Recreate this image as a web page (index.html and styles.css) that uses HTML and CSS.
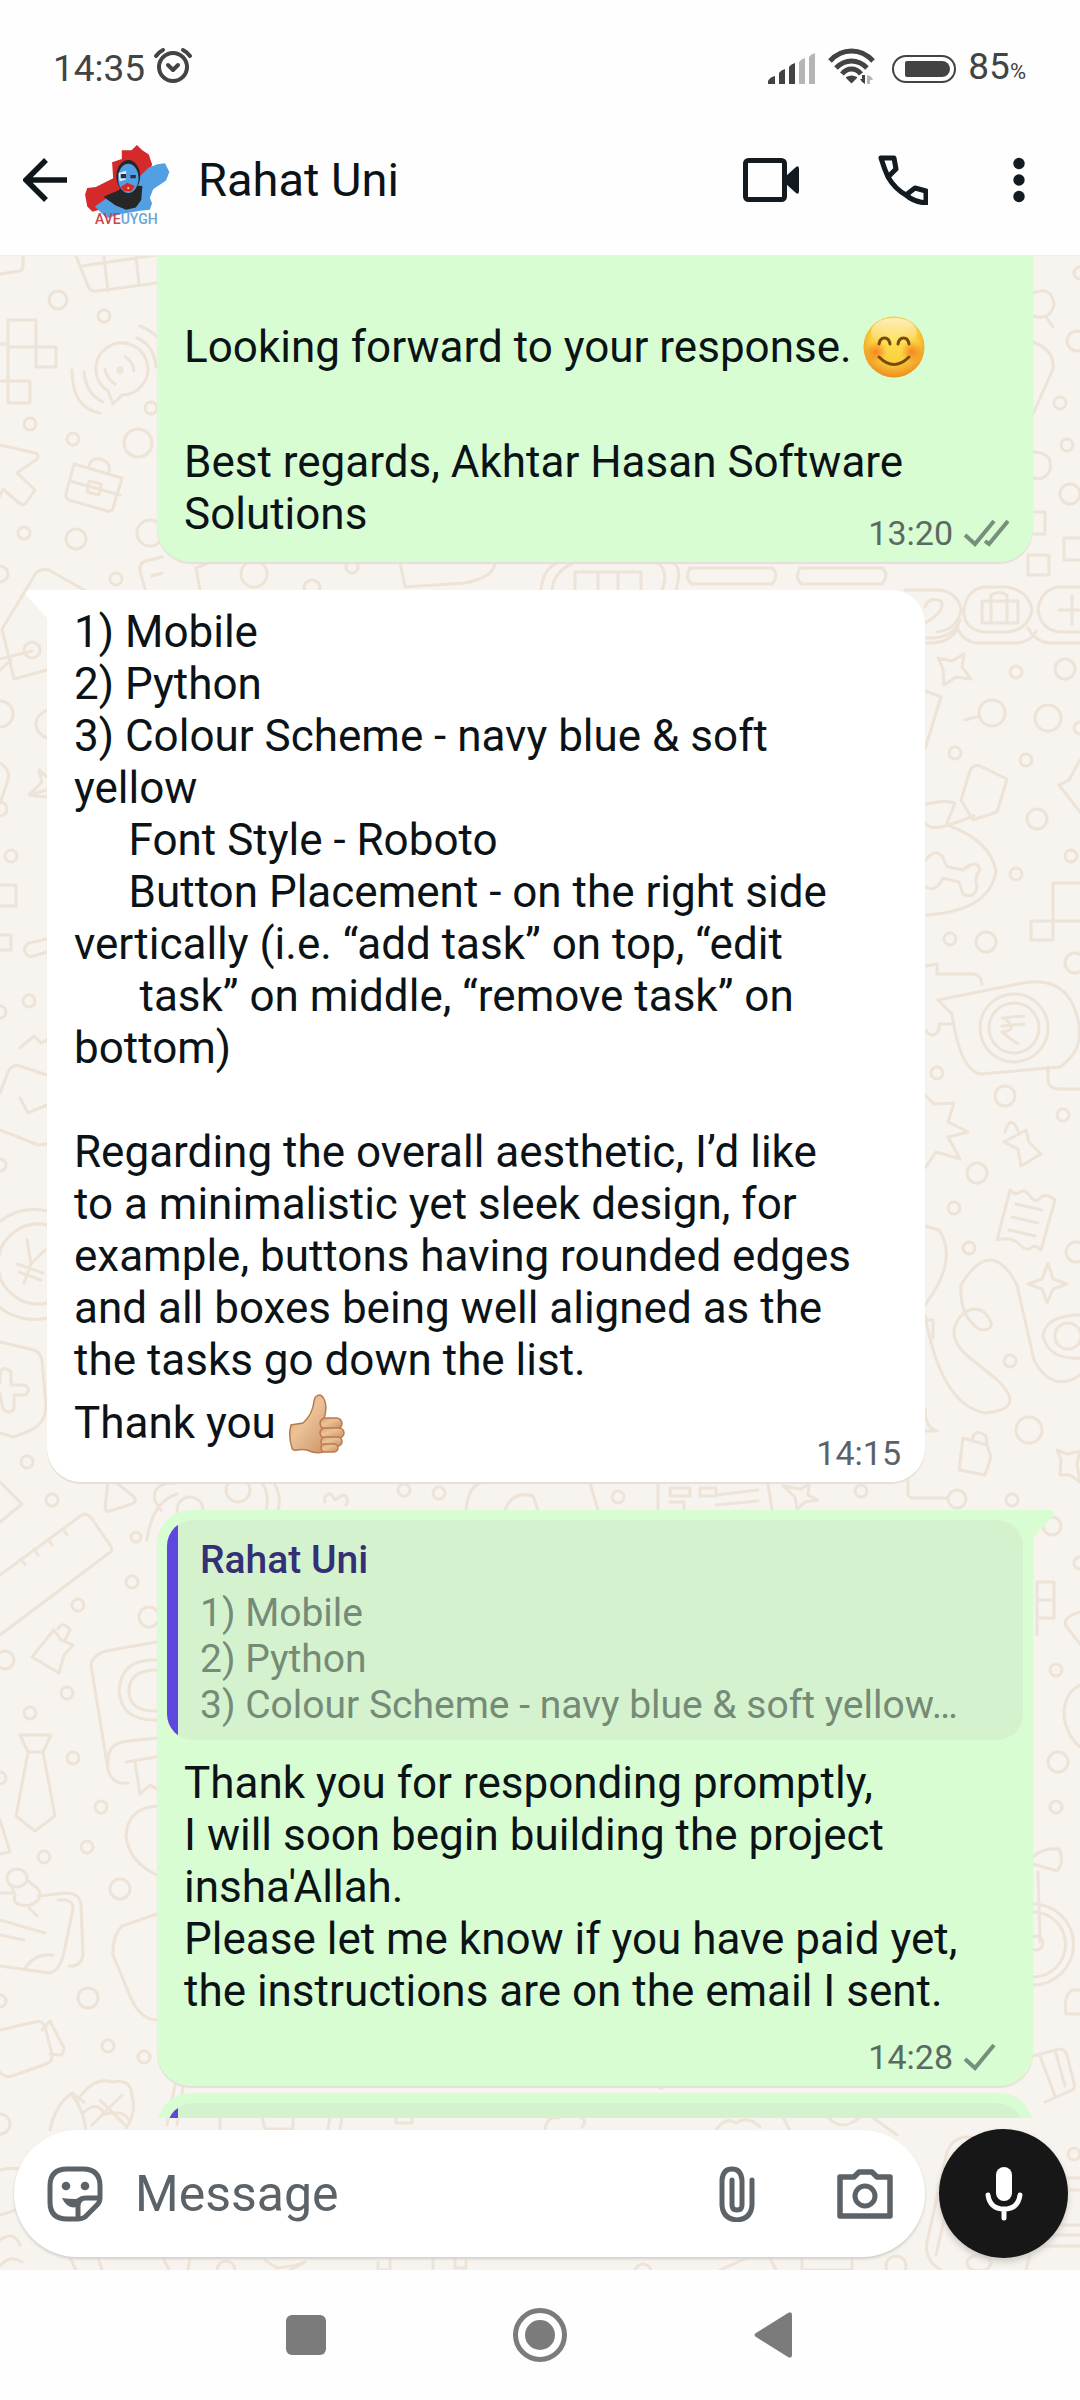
FILE: index.html
```
<!DOCTYPE html>
<html lang="en">
<head>
<meta charset="utf-8">
<meta name="viewport" content="width=device-width, initial-scale=1">
<title>Rahat Uni</title>
<link rel="stylesheet" href="styles.css">
</head>
<body>
<div class="status-bar">
  <div class="status-group">
    <time class="clock">14:35</time>
    <svg class="alarm" viewBox="0 0 40 40" width="40" height="40" aria-hidden="true"><g fill="none" stroke="#434343" stroke-width="4" stroke-linecap="round" stroke-linejoin="round"><circle cx="20" cy="21" r="14"/><path d="M15 19l5 5 5-5M3 10q3-4 7-6M37 10q-3-4-7-6"/></g></svg>
  </div>
  <div class="status-group status-right">
    <svg viewBox="0 0 48 32" width="48" height="32" aria-hidden="true"><path fill="#434343" d="M0 31v-3q2-4 7-5v8zM11 31V20q2-3 6-4v15zM21 31V14q2-3 6-4v21z"/><path fill="#b5b5b5" d="M31 31V9q2-3 6-4v26zM41 31V4q2-3 6-4v31z"/></svg>
    <svg class="wifi" viewBox="0 0 48 36" width="48" height="36" aria-hidden="true"><g fill="none" stroke="#434343" stroke-width="5"><path d="M2 13q9-10 21.500-10T45 13M8 20q7-7 15.500-7T39 20M14 26q4-5 9.500-5t9.500 5"/></g><path fill="#434343" d="M18 29q5.500-3 11 0v1l-5.500 5.500L18 30zM37 27v9q-3-1-5-5h2v-4z"/><path fill="#b5b5b5" d="M39 36v-9q5 1 6 5h-3v4z"/></svg>
    <svg viewBox="0 0 64 28" width="64" height="28" aria-hidden="true"><rect x="1" y="1" width="62" height="26" rx="13" fill="none" stroke="#434343" stroke-width="2"/><path fill="#434343" d="M15 6h35a8 8 0 0 1 0 16H15q-2 0-2-2V8q0-2 2-2z"/></svg>
    <span class="battery">85<small>%</small></span>
  </div>
</div>

<header class="app-bar">
  <button class="icon-button back" type="button" aria-label="Back">
    <svg viewBox="0 0 44 44" width="44" height="44"><path d="M44 22H5M23 2L3 22l20 20" fill="none" stroke="#0f171b" stroke-width="5.500"/></svg>
  </button>
  <svg class="avatar" viewBox="0 0 88 88" width="88" height="88" role="img" aria-label="Profile photo">
    <g transform="translate(2 -3) scale(1.08)">
      <path fill="#d42a2c" d="M1 57l2-6 8-1 16-8-1-15 9-3v-8h9l5-5 5 5 6 4 3 9-2 8 8 1-10 11-19 14-32 10-5-5z"/>
      <path fill="#539fe3" d="M50 42l10-10 8-3 7-1 4 8-3 8-12 8-3 8 2 5-2 6-9 1-12 2-6 1-13 4-11-11 10-7z"/>
      <path fill="#262626" d="M18 59l14-6 5-5 17 1-1 13-5 7-9 2-10-4z"/>
      <ellipse cx="41" cy="40" rx="11" ry="15" fill="#262626"/>
      <ellipse cx="41" cy="42" rx="9.500" ry="13.500" fill="#539fe3"/>
      <path fill="#d7ecfb" d="M32 37l7-2v8l-6 2z"/><path fill="#23324a" d="M34 38h5v4h-5zM43 39h5v3h-5z"/>
      <path fill="#d42a2c" d="M34 50l6-4 7 3-3 5h-7z"/><circle cx="41" cy="51" r="1" fill="#ffd65c"/>
    </g>
    <text x="13" y="88" class="avatar-text" fill="#c8474b">AVE<tspan fill="#69a4d2">UYGH</tspan></text>
  </svg>
  <h1 class="contact">Rahat Uni</h1>
  <div class="actions">
    <button class="icon-button" type="button" aria-label="Video call">
      <svg viewBox="0 0 56 44" width="56" height="44"><rect x="2.500" y="2.500" width="39" height="39" rx="3" fill="none" stroke="#131b20" stroke-width="5"/><path fill="#131b20" d="M43 18L53 9q3-2 3 2v22q0 4-3 2L43 26z"/></svg>
    </button>
    <button class="icon-button" type="button" aria-label="Voice call">
      <svg viewBox="0 0 50 50" width="50" height="50"><path fill="none" stroke="#131b20" stroke-width="5" stroke-linejoin="round" d="M3 3h13l2 11-8 8Q6 13 3 3zM10 22q7 12 18 18l9-7 11 3v12Q36 47 28 40"/></svg>
    </button>
    <button class="icon-button" type="button" aria-label="More options">
      <svg viewBox="0 0 24 46" width="24" height="46"><g fill="#131b20"><circle cx="12" cy="6.500" r="5.700"/><circle cx="12" cy="23" r="5.700"/><circle cx="12" cy="39.500" r="5.700"/></g></svg>
    </button>
  </div>
</header>

<main class="chat">
  <svg class="wallpaper" viewBox="0 256 1080 2014" preserveAspectRatio="xMidYMin slice" aria-hidden="true">
    <g fill="none" stroke="#eee3d7" stroke-width="3" stroke-linejoin="round" stroke-linecap="round">
      <!-- left column -->
      <path d="M23 256v10q0 4-4 5l-19 3M76 256l12 30q2 6 9 5l60-8M82 266l75-11M104 257l4 34M136 256l3 28"/>
      <path d="M8 320h28v27H8zM36 347h20v20H36zM8 381h22v22H8zM0 344h8M8 347v34H0"/>
      <path d="M108 391a26 26 0 1 1 14 4l-9 9zM72 370q0 38 28 43M84 372q2 22 19 30M105 369q2 10 10 15M125 357q8 4 9 14M140 326q9 3 17 11M137 338q17 7 19 29"/><circle cx="120" cy="370" r="2"/>
      <path d="M0 445l35 8q5 2 2 6l-20 14 18 17-9 13q-3 3-7 0L3 489l-3 7M74 464l48 14-9 30q-1 4-6 3l-38-11q-4-2-3-6zM70 481l50 14M89 466q3-10 14-6 8 3 6 12M89 481l12 3-2 11-12-3z"/>
      <path d="M84 590L49 570q-8-2-13 3L2 629l12 50 33-9M0 659l32-8M0 670l11-10M145 589l-5-18q-1-8 6-10l16-4M152 576l10-3"/>
      <path d="M47 710q-12 6-11 15t11 13M0 763q12 7 7 20l-7 20M29 795l18-5M47 797q-14-1-18-2l13-13-3-12 8 7M0 885h16v21H0M0 935h11v15H0M47 939l-18 4q-7 4-3 11 3 4 8 2l13-4M20 1048l14-12 7 7 6-3M0 1093l8-21q4-8 12-6l27 9M20 1098l8 15 19-8M0 1130l38 15 9-1"/>
      <path d="M47 1211A55 55 0 1 0 47 1318M47 1225A40 40 0 1 0 47 1303M27 1240l4 24 14-14M17 1264l26 9M19 1272l22 8M31 1264l-7 19M0 1342l34 8q7 3 8 10l4 45q0 18-15 25l-17 7-14-4M0 1383v-11q4-7 11 0v13h14q7 5 0 10H14v14q-5 6-11 0l-3-15M0 1482l22 22-22 18"/>
      <path d="M108 1483q5-3 10 1l15 12q5 5-1 8l-22 7q-5 1-5-4zM0 1575l82-60q5-3 10 4l18 26q4 6-1 8L0 1635M20 1559l5 5M34 1549l4 6M48 1539l4 6M63 1529l4 6"/>
      <path d="M48 1637l-16 20 27 16 5-18 9-10-12-5-7-10zM58 1629q5-9 12 1l-5 10M20 1735h31l-8 17H28zM28 1752l-12 64 19 15 20-15-12-64M157 1642l-46 8q-18 3-20 15l17 105q4 15 20 13M108 1765q-2-22 20-24l29-3M126 1762l30-5M135 1762l5 32 10-9 7 4M0 1820l10 32-10 2"/>
      <path d="M157 1660q-36-2-38 31 2 30 38 29M157 1670q-28 0-28 21t28 20M157 1806q-30 2-31 31 4 26 31 38M157 1914l-35 12q-10 10-9 29l17 41q10 24 27 24"/>
      <ellipse cx="17" cy="1878" rx="10" ry="9"/><path d="M11 1885l4 10q-4 12 15 10 15-6 8-16l-11-9M29 1908l8 8M0 1893h12M38 1896l28-3q14 0 15 12l2 50q-2 12-14 11M0 1966l50 7q10-3 14-20l9-45q0-10-15-8M0 1920l45 13M0 1935l24 5M25 1968q10-15 28-13M0 2030l35-8q8-2 10 5l7 27q1 8-6 10l-34 12q-8 2-12-4M42 2030l8-9 14 27-2 7-12-1"/>
      <path d="M50 2130q5-25 22-37l12 9M72 2095q12 15 14 36M78 2100q15-24 35-18 18-4 19 14 5 16-6 32M84 2112q14-12 20 2 20-4 24 5M92 2125l30-30M100 2100l25 25M0 2170q25-6 35 10M0 2215l32-10M0 2240q14-10 20 5M0 2266q10-12 22-4M70 2258l6 12M98 2258l4 12M163 2258l6 12M190 2258l-2 12M265 2260l12 8q20-2 28-6l-15 8M378 2262v8h12v-12M433 2258v12M455 2258v10h11v-8"/>
      <!-- bands between the bubbles -->
      <path d="M200 590l-4-22 20-8M400 562l5 25 60-4q30-6 30-21M541 590q2-24 20-28M552 590q2-20 24-28M668 562q16 0 8 28M656 562q14 8 6 28M575 590v-18h66v18M690 568h82q8 6 0 16h-80q-8-6-2-16M700 562h70M800 568h82q8 6 0 16h-80q-8-6-2-16M598 572v18M618 572v18"/>
      <path d="M175 1483q-24 0-20 18l6 9M147 1540q5-38 30-46M262 1483q8 12 4 27M274 1483q8 14 4 27M325 1502q-2-8 6-8l4 6 8-5q7 2 3 10M466 1510q2-22 14-27M505 1510q8-20 28-14l5 14M590 1483l8 27M658 1483v27M670 1488h20v8h-20zM700 1488h16v8h-16zM670 1502h14v8M716 1495l42-5M716 1505l42-4M768 1484l4 26M783 1486l18 3 8-5-1 11 10 5-13 2-8 7-2-12zM908 1478v17l3 3h36"/><circle cx="238" cy="1490" r="12"/><circle cx="190" cy="1510" r="13"/>
      <path d="M175 2085l-8 40M183 2087l-6 38M220 2117v12M262 2117l3 12h28v-12M330 2117l-2 12M342 2117l-2 12M396 2117v6h16v-6M545 2130q2-15 14-12M580 2117q8 4 2 10M716 2130q10-14 20-7 12-8 24 4M783 2117l6 12M828 2117q14 16 32 0M872 2117l25 18M660 2088l15-6M720 2270l40-18M770 2258l6 12M802 2258v12h50M852 2258v12"/>
      <!-- right column -->
      <path d="M1033 293q18-8 21 11-3 17-21 12M1046 317l7 10M1033 342q22 8 20 27l-20 45M1033 452q20 0 17 18-5 11-17 8M1033 512h12v22h-12M1028 555h21v20h-21zM1080 538h-16v22h16"/>
      <path d="M905 590h36q18 4 20 20-4 20-24 22M900 638h30q24 0 30-18M983 587h24q22 4 25 23-4 20-25 22h-24q-20-4-19-22 2-19 19-23zM1080 587h-22q-18 4-20 23 3 20 22 22h20M958 630q8 13 20 13h40q14-2 18-12M1028 628q8 15 24 15h28M982 601h36v22h-36zM991 623v-28q8-5 16 0v28M1072 596v28M1059 610h21M900 643h30q20 0 28-15M925 607q4-11 16-6 5 10-16 22"/>
      <path d="M938 658l14 3 12-7-2 13 9 12-15-2-12 8-1-16zM925 691l16 6-16 52M965 720l15-4M925 804l20-3 10 2-8 20M925 823q5 8 24 2l25-9M980 766l27 13-10 33-24 8-12-20 9-29q3-7 10-5M950 826q40 15 46 45-6 40-70 44M925 861q10-14 18-4 2 8 5 10l15 3q14-12 17 0-6 6-3 16-2 14-14 8l-4-12-16-4q-8 16-19 8"/>
      <path d="M1080 760l-11 20-10 5 21 27M1080 883h-27v57h-22v-19h49M925 966l12-2v10h36q8 0 9 10M925 1030q8 10 14 0v-6h13M938 1000l80-16q42-10 56 23 16 40-14 60l-80 7q-20-4-28-60zM1048 1067v12q0 10 12 10h20"/>
      <circle cx="1014" cy="1028" r="34"/><circle cx="1014" cy="1028" r="25"/><path d="M1002 1018l22-2M1002 1026l22-2M1004 1018q16 12-2 14l16 12"/>
      <path d="M925 1095l9 9 20-1-6 19 20 10-20 5 12 22-24-7-11 16M1004 1142l22-12 3 12 12 12-20 12-3-17zM1005 1132q6-20 14 1M1010 1190q5 6 10 2t10 4 10 2 15 2l-14 50q-6-6-10-2t-12-4-22-4zM1016 1204l26 6M1012 1217l26 6M1009 1230l26 6"/>
      <path d="M925 1226l14 4q20 30-14 75M925 1315q16 90 60 98 44-4 10-35l-25-20q-25-20-11-40 12-14 25-6 16 18-3 18-22-12-20-45 30-50 56 0l17 75q18 34 46 15M925 1320h8v18M1048 1263l5 16 14 5-14 5-6 14-5-14-14-5 14-5zM1080 1315q-34 0-37 21 6 24 37 22M925 1408q0 20 12 23h-12M963 1438l24 7 4 12-6 18-26-5zM972 1441q2-14 14-5l1 8M1057 1450l10 4 13-3-3 13 3 18-10-7-10 0 1-16z"/>
      <path d="M1037 1635v-53h17v36h-17M1037 1600h17M1080 1612q-18 5-14 14l14 18M1080 1685q-16 8-16 30 2 20 16 32M1033 1857q10-10 26-8 6 12-2 22l-24-7M1038 1872l2 70M1033 1904a40 40 0 1 1 0 81M1033 1912a32 32 0 1 1 0 65M1080 1990h-8q-9 6-6 24h14M1033 2056l26-7q6 0 8 6l7 28q2 6-4 8l-25 11M1040 2056l15 40M1055 2050l10 36"/>
      <path d="M975 2138q-20-5-28 14l-20 90q-3 18 14 28M960 2150l-24 105M1060 2178h20M1062 2190h20M1055 2225h25M1050 2235h30M1040 2246h40M1030 2255l-4 15"/>
      <ellipse cx="979" cy="2263" rx="12" ry="8"/>
      <g class="dots">
        <circle cx="58" cy="300" r="9"/><circle cx="104" cy="316" r="6"/><circle cx="151" cy="408" r="6"/><circle cx="30" cy="424" r="6"/><circle cx="73" cy="439" r="6"/><circle cx="138" cy="443" r="14"/><circle cx="24" cy="533" r="6"/><circle cx="76" cy="539" r="10"/><circle cx="150" cy="533" r="13"/><circle cx="0" cy="574" r="8"/><circle cx="116" cy="579" r="6"/><circle cx="32" cy="650" r="8"/><circle cx="0" cy="714" r="13"/><circle cx="0" cy="809" r="7"/><circle cx="11" cy="856" r="6"/><circle cx="29" cy="1001" r="6"/><circle cx="0" cy="1012" r="6"/><circle cx="0" cy="1165" r="6"/><circle cx="27" cy="1462" r="6"/><circle cx="52" cy="1500" r="6"/><circle cx="132" cy="1582" r="6"/><circle cx="78" cy="1605" r="6"/><circle cx="149" cy="1617" r="10"/><circle cx="5" cy="1660" r="9"/><circle cx="67" cy="1693" r="6"/><circle cx="30" cy="1713" r="6"/><circle cx="73" cy="1758" r="6"/><circle cx="0" cy="1778" r="6"/><circle cx="101" cy="1807" r="6"/><circle cx="87" cy="1847" r="6"/><circle cx="44" cy="1857" r="6"/><circle cx="120" cy="1889" r="10"/><circle cx="0" cy="2001" r="6"/><circle cx="88" cy="1998" r="10"/><circle cx="108" cy="2046" r="6"/><circle cx="144" cy="2057" r="6"/><circle cx="0" cy="2124" r="10"/><circle cx="136" cy="1537" r="5"/>
        <circle cx="254" cy="574" r="13"/><circle cx="352" cy="567" r="6"/><circle cx="312" cy="588" r="8"/><circle cx="404" cy="1490" r="6"/><circle cx="439" cy="1493" r="6"/><circle cx="618" cy="1497" r="6"/><circle cx="861" cy="1491" r="6"/><circle cx="957" cy="1499" r="9"/><circle cx="1012" cy="1500" r="6"/><circle cx="226" cy="2270" r="9"/><circle cx="643" cy="2272" r="8"/>
        <circle cx="1080" cy="273" r="6"/><circle cx="1077" cy="341" r="10"/><circle cx="1060" cy="403" r="6"/><circle cx="1067" cy="445" r="6"/><circle cx="1070" cy="494" r="10"/><circle cx="1016" cy="672" r="6"/><circle cx="1065" cy="669" r="10"/><circle cx="992" cy="713" r="13"/><circle cx="1048" cy="718" r="13"/><circle cx="1080" cy="728" r="6"/><circle cx="955" cy="753" r="6"/><circle cx="1026" cy="760" r="6"/><circle cx="1037" cy="819" r="10"/><circle cx="1071" cy="856" r="6"/><circle cx="1016" cy="874" r="6"/><circle cx="950" cy="939" r="6"/><circle cx="986" cy="942" r="10"/><circle cx="1075" cy="963" r="10"/><circle cx="937" cy="1073" r="6"/><circle cx="1005" cy="1096" r="10"/><circle cx="1063" cy="1115" r="6"/><circle cx="977" cy="1173" r="10"/><circle cx="954" cy="1208" r="6"/><circle cx="969" cy="1248" r="6"/><circle cx="1076" cy="1252" r="10"/><circle cx="1010" cy="1361" r="6"/><circle cx="1068" cy="1336" r="13"/><circle cx="1029" cy="1430" r="13"/><circle cx="1052" cy="1526" r="9"/><circle cx="1080" cy="1563" r="6"/><circle cx="1056" cy="1670" r="6"/><circle cx="1058" cy="1762" r="10"/><circle cx="1056" cy="1807" r="6"/><circle cx="1036" cy="1943" r="7"/><circle cx="1074" cy="2154" r="6"/><circle cx="896" cy="2266" r="10"/>
      </g>
    </g>
  </svg>

  <div class="messages">
    <article class="bubble out continued">
      <div class="body">
        <div class="text"><p class="emoji-line">Looking forward to your response. <svg class="emoji" viewBox="0 0 62 62" width="62" height="62" role="img" aria-label="smiling face"><defs><radialGradient id="face" cx="50%" cy="38%" r="62%"><stop offset="0" stop-color="#fce04d"/><stop offset=".6" stop-color="#fbd03f"/><stop offset="1" stop-color="#ec8e1c"/></radialGradient><radialGradient id="blush"><stop offset="0" stop-color="#f5701b" stop-opacity=".8"/><stop offset="1" stop-color="#f5701b" stop-opacity="0"/></radialGradient><linearGradient id="shine" x1="0" y1="0" x2="0" y2="1"><stop offset="0" stop-color="#fff" stop-opacity=".65"/><stop offset="1" stop-color="#fff" stop-opacity="0"/></linearGradient></defs><circle cx="31" cy="31" r="30.500" fill="url(#face)"/><ellipse cx="31" cy="16" rx="23" ry="14" fill="url(#shine)"/><circle cx="13" cy="36" r="11" fill="url(#blush)"/><circle cx="49" cy="36" r="11" fill="url(#blush)"/><g fill="none" stroke="#7a4a0c" stroke-width="3" stroke-linecap="round"><path d="M16 28q1-6 5.500-6t5.500 6M35 28q1-6 5.500-6t5.500 6"/><path d="M16 41q15 15 30 0"/></g></svg></p><p class="lines">
Best regards, Akhtar Hasan Software
Solutions</p></div>
        <div class="meta"><time>13:20</time><svg viewBox="0 0 46 28" width="46" height="28" role="img" aria-label="Delivered"><path fill="none" stroke="#788f7c" stroke-width="4" d="M2 16l10 9L31 2M22 22l4 3L45 2"/></svg></div>
      </div>
    </article>

    <article class="bubble in tail-left">
      <div class="body">
        <div class="text"><p class="lines">1) Mobile
2) Python
3) Colour Scheme - navy blue &amp; soft
yellow
     Font Style - Roboto
     Button Placement - on the right side
vertically (i.e. “add task” on top, “edit
      task” on middle, “remove task” on
bottom)

Regarding the overall aesthetic, I’d like
to a minimalistic yet sleek design, for
example, buttons having rounded edges
and all boxes being well aligned as the
the tasks go down the list.</p><p class="emoji-line">Thank you <svg class="emoji" viewBox="0 0 62 62" width="62" height="62" role="img" aria-label="thumbs up"><defs><linearGradient id="skin" x1="0" y1="0" x2="1" y2="1"><stop offset="0" stop-color="#d9a478"/><stop offset=".4" stop-color="#ebc297"/><stop offset="1" stop-color="#c88d60"/></linearGradient></defs><g fill="url(#skin)" stroke="#b97a4c" stroke-width="1.500"><path d="M4 33q-3 11 1 23 1 3 5 2 5-1 10 0 8 4 16 2l11-4V30H36q3-8 3-15-1-10-6-12-5 0-6 6-1 13-11 22z"/><rect x="33" y="26" width="22" height="11" rx="5.500"/><rect x="33" y="36" width="24" height="10" rx="5"/><rect x="34" y="45" width="21" height="9" rx="4.500"/><rect x="34" y="52" width="17" height="8" rx="4"/></g></svg></p></div>
        <div class="meta"><time>14:15</time></div>
      </div>
    </article>

    <article class="bubble out tail-right">
      <blockquote class="quote">
        <cite class="quote-name">Rahat Uni</cite>
        <p class="quote-text">1) Mobile
2) Python
3) Colour Scheme - navy blue &amp; soft yellow…</p>
      </blockquote>
      <div class="body below">
        <div class="text"><p class="lines">Thank you for responding promptly,
I will soon begin building the project
insha'Allah.
Please let me know if you have paid yet,
the instructions are on the email I sent.</p></div>
        <div class="meta"><time>14:28</time><svg viewBox="0 0 46 28" width="46" height="28" role="img" aria-label="Sent"><path fill="none" stroke="#788f7c" stroke-width="4" d="M2 16l10 9L31 2"/></svg></div>
      </div>
    </article>

    <article class="bubble out followup">
      <blockquote class="quote"></blockquote>
    </article>
  </div>

  <form class="composer">
    <div class="field">
      <button class="icon-button" type="button" aria-label="Stickers">
        <svg viewBox="0 0 56 56" width="56" height="56"><path fill="none" stroke="#5b6368" stroke-width="5" stroke-linejoin="round" d="M20 3h16q17 0 17 17v12q0 4-3 7L38 51q-3 2-7 2H20Q3 53 3 36V20Q3 3 20 3zM31 53V40q0-8 8-8h14"/><path fill="#5b6368" d="M15 32q6 1 14 1 5-3 9-3l-6 10q-11 5-17-8z"/><circle cx="19" cy="20" r="4.300" fill="#5b6368"/><circle cx="38" cy="20" r="4.300" fill="#5b6368"/></svg>
      </button>
      <input class="message-input" type="text" placeholder="Message" aria-label="Message">
      <button class="icon-button" type="button" aria-label="Attach">
        <svg viewBox="0 0 36 56" width="36" height="56"><path fill="none" stroke="#5b6368" stroke-width="5" stroke-linecap="round" d="M33 14v25q-1 14-15 15Q4 53 3 39V14q1-11 10-11t10 11v25q0 5-5 5t-5-5V14"/></svg>
      </button>
      <button class="icon-button" type="button" aria-label="Camera">
        <svg viewBox="0 0 56 50" width="56" height="50"><path fill="none" stroke="#5b6368" stroke-width="5.500" stroke-linejoin="round" d="M3 8h14l5-5h13l5 5h13v39H3z"/><circle cx="28" cy="27" r="10" fill="none" stroke="#5b6368" stroke-width="5"/></svg>
      </button>
    </div>
    <button class="mic" type="button" aria-label="Record voice message">
      <svg viewBox="0 0 38 54" width="38" height="54"><rect x="11" y="0" width="16" height="34" rx="8" fill="#fff"/><path fill="none" stroke="#fff" stroke-width="5" stroke-linecap="round" d="M3 28q2 14 16 14t16-14M19 42v9"/></svg>
    </button>
  </form>
</main>

<nav class="system-nav" aria-label="System navigation">
  <button class="icon-button" type="button" aria-label="Recent apps"><svg viewBox="0 0 54 54" width="54" height="54"><rect x="7" y="7" width="40" height="40" rx="6" fill="#7b7b7b"/></svg></button>
  <button class="icon-button" type="button" aria-label="Home"><svg viewBox="0 0 54 54" width="54" height="54"><circle cx="27" cy="27" r="24.500" fill="none" stroke="#7b7b7b" stroke-width="5"/><circle cx="27" cy="27" r="15" fill="#7b7b7b"/></svg></button>
  <button class="icon-button" type="button" aria-label="Back"><svg viewBox="0 0 54 54" width="54" height="54"><path fill="#7b7b7b" d="M9 25L41 5q4-2 4 2v40q0 4-4 2L9 29q-3-2 0-4z"/></svg></button>
</nav>
</body>
</html>
```
FILE: styles.css
```
* {
  box-sizing: border-box;
}

body {
  margin: 0;
  height: 100vh;
  display: flex;
  flex-direction: column;
  background: #fefefe;
  color: #0c1317;
  font-family: Roboto, "Noto Sans", sans-serif;
}

p, h1, blockquote {
  margin: 0;
}

svg {
  display: block;
  flex: none;
}

.icon-button {
  display: flex;
  padding: 0;
  border: 0;
  background: none;
}

/* Status bar */
.status-bar {
  display: flex;
  justify-content: space-between;
  align-items: center;
  height: 104px;
  padding: 34px 54px 0 53px;
  color: #434343;
  font-size: 37px;
}

.status-group {
  display: flex;
  align-items: center;
  gap: 8px;
}

.status-right {
  gap: 12px;
}

.alarm, .wifi {
  margin-bottom: 6px;
}

.wifi {
  margin-right: 4px;
}

.clock, .battery {
  line-height: 44px;
}

.battery small {
  font-size: 22px;
}

/* App bar */
.app-bar {
  display: flex;
  align-items: center;
  height: 152px;
  padding: 0 49px 0 23px;
  border-bottom: 1px solid #eeeeec;
}

.avatar {
  margin: 0 28px 0 15px;
  overflow: visible;
}

.avatar-text {
  font-size: 14px;
  font-weight: 500;
}

.contact {
  flex: 1;
  font-size: 47px;
  font-weight: 400;
}

.actions {
  display: flex;
  align-items: center;
  gap: 79px;
}

/* Chat area */
.chat {
  position: relative;
  flex: 1;
  min-height: 0;
  display: flex;
  flex-direction: column;
  background: #f7f3ee;
  overflow: hidden;
}

.wallpaper {
  position: absolute;
  inset: 0;
  width: 100%;
  height: 100%;
}

.messages {
  position: relative;
  flex: 1;
  min-height: 0;
  display: flex;
  flex-direction: column;
  gap: 28px;
  padding: 0 47px;
  overflow: hidden;
}

.bubble {
  position: relative;
  flex: none;
  border-radius: 34px;
  box-shadow: 0 2px 1px #e4e0d9;
}

.out {
  margin-left: 110px;
  background: #d8fdd2;
}

.in {
  margin-right: 108px;
  background: #fff;
}

.continued {
  padding-top: 38px;
  border-radius: 0 0 34px 34px;
}

.tail-left {
  border-top-left-radius: 0;
}

.tail-right {
  border-top-right-radius: 0;
}

.tail-left::before,
.tail-right::before {
  content: "";
  position: absolute;
  top: 0;
  width: 21px;
  height: 28px;
}

.tail-left::before {
  right: 100%;
  background: #fff;
  clip-path: polygon(10% 0, 100% 0, 100% 100%, 0 18%, 0 8%);
}

.tail-right::before {
  left: 100%;
  background: #d8fdd2;
  clip-path: polygon(0 0, 90% 0, 100% 8%, 100% 18%, 0 100%);
}

.followup {
  margin-top: -21px;
}

.body {
  display: grid;
  padding: 16px 24px 10px 27px;
}

.text, .meta {
  grid-area: 1 / 1;
}

.text {
  padding-bottom: 12px;
  font-size: 44px;
  line-height: 52px;
}

.below .text {
  padding-bottom: 59px;
}

.lines {
  white-space: pre-wrap;
}

.emoji-line {
  display: flex;
  align-items: center;
  gap: 11px;
  line-height: 74px;
}

.meta {
  align-self: end;
  justify-self: end;
  display: flex;
  align-items: center;
  gap: 10px;
  color: #5b6a63;
  font-size: 34px;
  line-height: 38px;
}

.in .meta {
  color: #5b6368;
}

/* Quoted message */
.quote {
  display: flex;
  flex-direction: column;
  gap: 7px;
  min-height: 100px;
  padding: 17px 20px 12px 33px;
  border-radius: 26px;
  background: linear-gradient(to right, #5e47de 11px, #d5f2cf 11px);
  font-size: 39px;
  line-height: 46px;
}

.bubble:has(.quote) {
  padding: 10px 10px 0;
}

.bubble:has(.quote) .body {
  padding: 17px 14px 10px 17px;
}

.quote-name {
  color: #352f75;
  font-style: normal;
  font-weight: 500;
}

.quote-text {
  color: #758b77;
  white-space: pre-wrap;
}

/* Composer */
.composer {
  position: relative;
  display: flex;
  align-items: center;
  gap: 14px;
  padding: 11px 12px 12px 14px;
}

.field {
  flex: 1;
  min-width: 0;
  display: flex;
  align-items: center;
  height: 127px;
  padding: 0 32px 0 33px;
  border-radius: 64px;
  background: #fff;
  box-shadow: 0 2px 3px #d2cfca;
}

.message-input {
  flex: 1;
  min-width: 0;
  padding: 0 30px 0 32px;
  border: 0;
  outline: 0;
  background: none;
  color: #0c1317;
  font-family: inherit;
  font-size: 50px;
}

.message-input::placeholder {
  color: #5b6368;
  opacity: 1;
}

.field .icon-button + .icon-button {
  margin-left: 82px;
}

.mic {
  flex: none;
  display: flex;
  align-items: center;
  justify-content: center;
  width: 129px;
  height: 129px;
  padding: 0;
  border: 0;
  border-radius: 50%;
  background: #171717;
  box-shadow: 0 4px 6px #cfcbc6;
}

/* System navigation */
.system-nav {
  display: flex;
  justify-content: center;
  align-items: center;
  gap: 180px;
  height: 130px;
}
```
